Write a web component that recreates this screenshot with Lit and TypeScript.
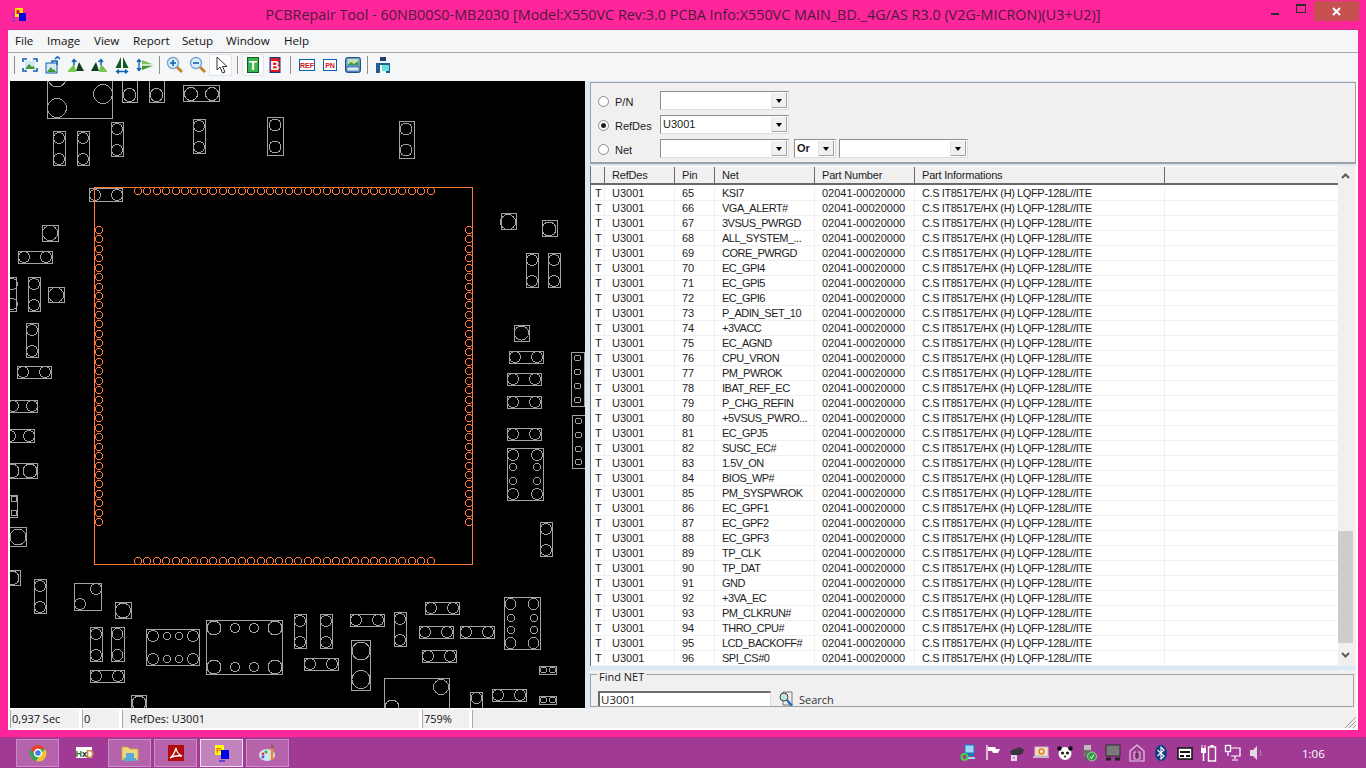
import { LitElement, html, css, svg } from "lit";
import { customElement } from "lit/decorators.js";

type Circle = [number, number, number];
type Part = { b: [number, number, number, number]; c: Circle[] };

const P = (x1: number, y1: number, x2: number, y2: number, ...c: Circle[]): Part => ({ b: [x1, y1, x2, y2], c });
const vp = (x: number, y: number, w = 12, r = 5.5) => P(x, y, x + w, y + 34, [x + w / 2, y + 7, r], [x + w / 2, y + 28, r]);
const hp = (x: number, y: number, w = 34, r = 5.5) => P(x, y, x + w, y + 12, [x + 6, y + 6, r], [x + w - 6, y + 6, r]);

const PARTS: Part[] = [
  P(47, 70, 112, 118, [57, 108, 9.5], [103, 94, 9.5], [57, 78, 9]),
  P(122, 70, 137, 102, [129.5, 95, 6.5]),
  P(149, 70, 164, 102, [156.5, 95, 6.5]),
  P(183, 85, 219, 101, [191, 94, 6.5], [212, 94, 6.5]),
  vp(53, 131), vp(77, 131), vp(111, 122), vp(193, 119),
  P(267, 117, 283, 155, [275, 125, 6], [275, 147, 6]),
  P(399, 121, 414, 158, [406, 129, 6], [406, 150, 6]),
  P(89, 188, 122, 201, [95, 195, 5.5], [117, 195, 5.5]),
  P(42, 225, 58, 241, [50, 233, 7.5]),
  hp(18, 251),
  P(0, 277, 16, 311, [12, 284, 5.5], [12, 304, 5.5]),
  vp(28, 277),
  P(48, 287, 64, 302, [56, 295, 7.5]),
  vp(26, 323),
  hp(17, 366),
  P(0, 400, 37, 412, [13, 406, 5.5], [32, 406, 5.5]),
  P(0, 429, 34, 442, [10, 436, 5.5], [29, 436, 5.5]),
  P(0, 463, 37, 478, [12, 471, 7], [30, 471, 7]),
  P(0, 495, 17, 517, [14, 499, 3], [14, 513, 3]),
  P(0, 527, 26, 546, [18, 537, 8]),
  P(0, 570, 20, 585, [12, 578, 7]),
  vp(34, 579),
  P(74, 583, 101, 610, [96, 589, 5.5], [80, 604, 5.5]),
  P(115, 602, 131, 618, [123, 610.5, 7.5]),
  vp(90, 627), vp(111, 627, 13), hp(90, 670),
  P(131, 695, 146, 720, [139, 703, 7]),
  P(146, 629, 199, 665, [153, 636, 5.5], [193, 636, 5.5], [153, 659, 5.5], [193, 659, 5.5], [167, 636, 3.5], [179, 636, 3.5], [167, 659, 3.5], [179, 659, 3.5]),
  P(206, 620, 282, 674, [214, 628, 7], [275, 628, 7], [214, 667, 7], [275, 667, 7], [235, 628, 4.5], [254, 628, 4.5], [235, 667, 4.5], [254, 667, 4.5]),
  vp(294, 614), vp(320, 614), hp(350, 614), vp(394, 612),
  hp(425, 602), hp(419, 626), hp(460, 626),
  P(504, 597, 540, 649, [510.5, 604, 5.5], [533.5, 604, 5.5], [510.5, 643, 5.5], [533.5, 643, 5.5], [511, 618, 3.5], [534, 618, 3.5], [511, 630, 3.5], [534, 630, 3.5]),
  hp(422, 650), hp(304, 658),
  P(351, 640, 370, 690, [361, 651, 9], [361, 679.5, 9]),
  P(384, 678, 449, 720, [441, 687, 7.5], [392, 707, 7]),
  P(470, 692, 482, 720, [476.5, 698, 5.5]),
  hp(492, 689),
  P(539, 666, 556, 674, [543.5, 670, 3], [552.5, 670, 3]),
  P(539, 696, 556, 704, [543.5, 700, 3], [552.5, 700, 3]),
  P(501, 213, 516, 229, [508, 222, 7.5]),
  P(542, 220, 557, 236, [549, 229, 7]),
  vp(526, 253), vp(548, 253),
  P(514, 325, 529, 341, [521.5, 333, 7]),
  hp(509, 351), hp(507, 373), hp(507, 396), hp(507, 428),
  P(571, 352, 584, 406, [577.5, 358, 3], [577.5, 372, 3], [577.5, 386, 3], [577.5, 400, 3]),
  P(572, 415, 585, 468, [578.5, 421, 3], [578.5, 435, 3], [578.5, 449, 3], [578.5, 462, 3]),
  P(507, 448, 543, 500, [513, 455, 5.5], [537, 455, 5.5], [513, 494, 5.5], [537, 494, 5.5], [513, 467, 3.5], [537, 467, 3.5], [513, 481, 3.5], [537, 481, 3.5]),
  vp(540, 522),
];

const PADS: [number, number][] = [];
for (let i = 0; i < 32; i++) {
  const h = Math.round(137.7 + i * 9.45);
  const v = Math.round(230 + i * 9.42);
  PADS.push([h, 191], [h, 561], [99, v], [469, v]);
}

const NETS = ["KSI7", "VGA_ALERT#", "3VSUS_PWRGD", "ALL_SYSTEM_...", "CORE_PWRGD", "EC_GPI4", "EC_GPI5", "EC_GPI6", "P_ADIN_SET_10", "+3VACC", "EC_AGND", "CPU_VRON", "PM_PWROK", "IBAT_REF_EC", "P_CHG_REFIN", "+5VSUS_PWRO...", "EC_GPJ5", "SUSC_EC#", "1.5V_ON", "BIOS_WP#", "PM_SYSPWROK", "EC_GPF1", "EC_GPF2", "EC_GPF3", "TP_CLK", "TP_DAT", "GND", "+3VA_EC", "PM_CLKRUN#", "THRO_CPU#", "LCD_BACKOFF#", "SPI_CS#0"];
const MENUS: [string, string][] = [["File", "m1"], ["Image", "m2"], ["View", "m3"], ["Report", "m4"], ["Setup", "m5"], ["Window", "m6"], ["Help", "m7"]];
const HEADS: [string, string][] = [["", "c0"], ["RefDes", "c1"], ["Pin", "c2"], ["Net", "c3"], ["Part Number", "c4"], ["Part Informations", "c5"], ["", "c6"]];

const ic = (body: unknown, w = 18, h = 18) => html`<svg class="ic" width=${w} height=${h} viewBox="0 0 18 18">${body}</svg>`;
const B = "#0b5fb5", G = "#3f9a35", DG = "#0d5a22";

const mountain = (flip: boolean) => svg`<g transform=${flip ? "translate(18 0) scale(-1 1)" : ""}>
  <path d="M1 15 7 8 9 15Z" fill="#6fc04a"/><path d="M9 15 12 6 17 15Z" fill="#0f3d20"/><path d="M1 15H9" stroke="#7cc655" stroke-width="2"/>
  <path d="M7 9V4M5 6l2-2.5L9.500 6" stroke=${B} stroke-width="1.500" fill="none"/></g>`;

const TOOLS = [
  ic(svg`<path d="M2 6V3H6M12 3H16V6M2 12V15H6M12 15H16V12" fill="none" stroke=${B} stroke-width="1.600"/><rect x="4" y="5" width="10" height="8" fill="#cfe6f4"/><path d="M4 13 8 8 11 11 12.500 10 14 13Z" fill=${G}/>`),
  ic(svg`<rect x="2" y="7" width="11" height="10" fill="#d8e8f2" stroke=${B}/><path d="M3 16 7 11 9 14 10 13 12 16Z" fill=${G}/><path d="M8 7V5H13V9M11 3 13.500 .8 16 3" fill="none" stroke=${B} stroke-width="1.500"/>`),
  ic(mountain(false)),
  ic(mountain(true)),
  ic(svg`<path d="M8 1V12H2.500Z" fill=${DG}/><path d="M10 1V12H15.500Z" fill=${DG}/><path d="M3.500 15.500H14.500M6 13.500 3.500 15.500 6 17.500M12 13.500 14.500 15.500 12 17.500" stroke=${B} stroke-width="1.300" fill="none"/>`),
  ic(svg`<path d="M6 4 17 8.300H6Z" fill="#7cc655"/><path d="M6 14 17 9.700H6Z" fill=${G}/><path d="M3 4V14M1 6 3 3.500 5 6M1 12 3 14.500 5 12" stroke=${B} stroke-width="1.300" fill="none"/>`),
];
const mag = (plus: boolean) => ic(svg`<path d="M10.500 10.500 16 16" stroke="#c9852a" stroke-width="3"/><circle cx="7" cy="7" r="5.500" fill="#d8eefa" stroke="#7aa5cf" stroke-width="1.400"/><path d=${plus ? "M4 7H10M7 4V10" : "M4 7H10"} stroke=${B} stroke-width="1.600"/>`);
const ref = (t: string, x: number, w: number) => ic(svg`<rect x=${x} y="3.500" width=${w} height="11" fill="#fff" stroke=${B}/><text x="9" y="12" text-anchor="middle" font-family="Liberation Sans" font-size="7" font-weight="700" fill="#d4141c">${t}</text>`);

const TRAY = [
  svg`<rect x="5" y="1" width="9" height="8" fill="#9fd8f5" stroke="#1a76c2"/><rect x="7" y="9" width="7" height="3" fill="#1a76c2"/><circle cx="4.500" cy="13" r="3" fill="none" stroke="#3fd84a" stroke-width="2"/><path d="M8 14H15" stroke="#9fd8f5" stroke-width="2"/>`,
  svg`<path d="M3 1V16" stroke="#fff" stroke-width="1.300"/><path d="M4 3H11L12 5H16L14 9H9L8 7H4Z" fill="#fff"/>`,
  svg`<path d="M2 7 12 3 16 6 14 10 4 13Z" fill="#3b3440"/><rect x="3" y="11" width="6" height="6" fill="#e9d4ee"/><path d="M5 14H7" stroke="#a03a94"/>`,
  svg`<rect x="3" y="3" width="13" height="9" fill="#f2e3c8" stroke="#c9b9c9"/><circle cx="9.500" cy="7.500" r="2.500" fill="none" stroke="#ef7a1a" stroke-width="1.500"/><path d="M1 13H17" stroke="#c4b4c4" stroke-width="2"/>`,
  svg`<circle cx="9" cy="9.500" r="6.500" fill="#fff"/><circle cx="3.500" cy="4.500" r="2.200" fill="#111"/><circle cx="14.500" cy="4.500" r="2.200" fill="#111"/><circle cx="6.500" cy="9" r="1.500" fill="#111"/><circle cx="11.500" cy="9" r="1.500" fill="#111"/><circle cx="9" cy="12.500" r="1" fill="#111"/>`,
  svg`<rect x="4" y="1" width="7" height="5" fill="#bdbdbd"/><rect x="3" y="6" width="8" height="7" fill="#6f6f6f"/><rect x="5.500" y="13" width="3" height="4" fill="#5b5b5b"/><circle cx="12" cy="12.500" r="4.500" fill="#2f9a3a" stroke="#e8f5e8" stroke-width=".6"/><path d="M10 12.500 11.500 14.500 14 10.500" stroke="#fff" fill="none"/>`,
  svg`<rect x="2" y="1" width="14" height="11" fill="#7a7a7a" stroke="#2c2c2c"/><path d="M2 15H7M11 15H16" stroke="#222" stroke-width="3"/>`,
  svg`<path d="M2 7 9 1 16 7V17H2Z" fill="none" stroke="#e6c9e6" stroke-width="1.200"/><path d="M6 8H12V15H6Z" fill="none" stroke="#e6c9e6"/><path d="M9 7V15" stroke="#2c2c2c"/>`,
  svg`<ellipse cx="9" cy="9" rx="6" ry="8" fill="#123f80"/><path d="M5.500 6 12 12 9 15V3L12 6 5.500 12" stroke="#fff" fill="none" stroke-width="1.100"/>`,
  svg`<rect x="2" y="4" width="14" height="11" fill="#fff" stroke="#111" stroke-width="1.500"/><path d="M4 8H14M4 12H8M10 12H14" stroke="#111" stroke-width="2"/>`,
  svg`<path d="M2 1V4M5 1V4" stroke="#fff"/><rect x="1" y="4" width="5" height="5" fill="#fff"/><path d="M3.500 9V17" stroke="#fff" stroke-width="1.500"/><rect x="8.500" y="3" width="7" height="14" fill="none" stroke="#fff" stroke-width="1.400"/><rect x="10.500" y="1" width="3" height="2" fill="#fff"/>`,
  svg`<rect x="1.500" y="1.500" width="5" height="6" fill="none" stroke="#fff" stroke-width="1.300"/><path d="M4 8V12M7 4H16V12H7M11 12V15M8 16H14" stroke="#fff" fill="none" stroke-width="1.200"/>`,
  svg`<path d="M2 6H5L9 2V16L5 12H2Z" fill="#e3dbe6"/><path d="M12 6Q14 9 12 12" stroke="#a9a" fill="none"/>`,
];

const TASK = [
  svg`<circle cx="11" cy="11" r="8" fill="#3aa655"/><path d="M11 3A8 8 0 0 1 18 7H11Z" fill="#e64536"/><path d="M3.500 8A8 8 0 0 0 9 19L12 13Z" fill="#3aa655"/><path d="M18 7A8 8 0 0 1 9 19L14 12Z" fill="#f4c430"/><path d="M11 3A8 8 0 0 0 4 7L8 13 11 7Z" fill="#e64536"/><circle cx="11" cy="11" r="3.500" fill="#3f7ee0" stroke="#fff" stroke-width="1.400"/>`,
  svg`<rect x="3" y="5" width="16" height="11" fill="#fff"/><text x="2.500" y="14.500" font-family="Liberation Sans" font-size="9" font-weight="700" fill="#1f7a2f">H</text><text x="9" y="14.500" font-family="Liberation Sans" font-size="9" font-weight="700" fill="#222">x</text><text x="13" y="15.500" font-family="Liberation Sans" font-size="11" font-weight="700" fill="#c98840">D</text>`,
  svg`<path d="M3 5H9L11 7H19V18H3Z" fill="#f0d77e" stroke="#c9a840"/><rect x="7" y="11" width="8" height="7" fill="#5aa9dd"/><path d="M5 19H17V16H5Z" fill="#5aa9dd"/>`,
  svg`<rect x="3" y="3" width="16" height="16" fill="#b30b0b"/><path d="M5 16Q9 13 11 6Q12 12 17 14Q10 13 5 16" fill="none" stroke="#fff" stroke-width="1.300"/>`,
  svg`<rect x="4" y="3" width="9" height="10" fill="#ffff00"/><text x="5" y="11" font-family="Liberation Sans" font-size="8" fill="#e3141c">P</text><rect x="10" y="8" width="8" height="9" fill="#0000ee"/><path d="M8 19H14" stroke="#0000ee"/>`,
  svg`<ellipse cx="10" cy="13" rx="8" ry="6" fill="#cfe4f2"/><circle cx="6" cy="12" r="1.400" fill="#e33"/><circle cx="9" cy="10" r="1.400" fill="#3a3"/><circle cx="6" cy="15" r="1.400" fill="#36c"/><path d="M15 18V6" stroke="#ef8a1a" stroke-width="2.400"/><path d="M14 6 15 2 17 6Z" fill="#7a5a40"/>`,
];

@customElement("app-root")
export class AppRoot extends LitElement {
  static styles = css`
    :host { display: flex; flex-direction: column; width: 1366px; height: 768px; overflow: hidden; background: #ff269c; font-family: "Liberation Sans", Arial, sans-serif; font-size: 11px; color: #1c1c1c; }
    .tb { height: 30px; display: grid; grid-template-columns: 1fr auto 1fr; align-items: start; flex: none; }
    .logo { margin: 7px 0 0 12px; }
    .title { font: 14.39px/30px "Open Sans", sans-serif; color: #4c1a3c; white-space: nowrap; }
    .wbtns { display: flex; justify-content: flex-end; padding-right: 7px; }
    .wb { width: 26px; height: 20px; display: flex; align-items: center; justify-content: center; }
    .wb.min i { width: 8px; height: 2px; background: #2b2b2b; margin-top: 8px; display: block; }
    .wb.max i { width: 8px; height: 6px; border: 1px solid #2b2b2b; border-top-width: 2px; display: block; margin-top: -3px; }
    .wb.cl { width: 45px; height: 20px; background: #c75050; margin-top: 1px; }
    .client { flex: none; height: 700px; margin: 0 8px; background: #f5f6f7; display: flex; flex-direction: column; box-shadow: 0 -1px 0 #d8288e; }
    .menu { height: 22px; display: flex; font: 11.6px/22px "Open Sans", sans-serif; color: #111; flex: none; }
    .menu span { display: block; padding-left: 7px; box-sizing: border-box; }
    .m1 { width: 32px; } .m2 { width: 47px; } .m3 { width: 39px; } .m4 { width: 49px; } .m5 { width: 44px; } .m6 { width: 58px; } .m7 { width: 40px; }
    .tools { height: 29px; flex: none; border-top: 1px solid #a8a8a8; display: flex; align-items: flex-start; padding: 1px 0 0 6px; box-sizing: border-box; }
    .btn { width: 23px; height: 22px; display: flex; align-items: center; justify-content: center; box-sizing: border-box; flex: none; }
    .btn.n { width: 22px; }
    .btn.on { background: #fbfcfd; box-shadow: inset 0 0 0 1px #e0e4e8; }
    .sep { width: 1px; height: 18px; background: #8f8f8f; margin: 2px 3px 0; flex: none; }
    .sep.first { margin: 2px 3px 0 0; }
    .sep.s2 { margin: 2px 4px 0 5px; }
    .sep.s3 { margin: 2px 4px 0 4px; }
    .ic { display: block; }
    .main { flex: 1; min-height: 0; display: flex; background: #fff; padding: 0 2px; }
    .pcb { width: 575px; height: 627px; background: #000; display: block; flex: none; }
    .right { width: 771px; background: #dce8f4; padding: 1px 0 0 5px; box-sizing: border-box; display: flex; flex-direction: column; }
    .filter { height: 82px; flex: none; background: #f0f0f0; border-top: 1px solid #a0a0a0; border-bottom: 2px solid #a0a0a0; border-right: 1px solid #a0a0a0; box-sizing: border-box; display: flex; flex-direction: column; padding: 8px 0 0 8px; gap: 5px; box-shadow: inset 1px 0 0 #a0a0a0; }
    .frow { display: flex; align-items: center; height: 19px; }
    .radio { width: 11px; height: 11px; border-radius: 50%; border: 1px solid #8a8a8a; background: #fff; box-sizing: border-box; display: flex; align-items: center; justify-content: center; flex: none; margin-top: 2px; }
    .radio.sel::after { content: ""; width: 5px; height: 5px; background: #222; border-radius: 50%; }
    .rl { width: 51px; padding: 2px 0 0 6px; box-sizing: border-box; flex: none; }
    .combo { height: 19px; box-sizing: border-box; background: #fff; border: 1px solid #8e8e8e; border-right-color: #dcdcdc; border-bottom-color: #dcdcdc; display: flex; justify-content: space-between; align-items: stretch; padding: 1px; flex: none; }
    .combo span { padding-left: 1px; line-height: 14px; }
    .combo b { font-weight: 700; padding-left: 1px; line-height: 15px; }
    .arrow { width: 16px; background: #f0f0f0; box-shadow: inset 1px 0 0 #e4e4e4, inset -1px -1px 0 #a0a0a0; display: flex; align-items: center; justify-content: center; }
    .arrow::after { content: ""; border: 3.5px solid transparent; border-top: 4px solid #000; border-bottom: 0; }
    .w129 { width: 129px; } .w42 { width: 42px; margin-left: 5px; } .w129b { width: 129px; margin-left: 3px; }
    .tw { flex: none; height: 500px; display: flex; background: #fff; border-right: 3px solid #f0f0f0; box-sizing: border-box; width: 766px; margin-top: 2px; }
    .tbl { flex: 1; min-width: 0; border-left: 1px solid #707070; }
    .grid { display: grid; grid-template-columns: 14px 70px 40px 100px 100px 250px 1fr; }
    .head { height: 19px; background: #f0f0f0; border-bottom: 2px solid #6a6a6a; border-top: 1px solid #fff; box-sizing: border-box; letter-spacing: -0.2px; }
    .head div { line-height: 16px; padding-left: 7px; border-right: 1px solid #6a6a6a; height: 17px; box-sizing: border-box; }
    .head div.c6 { border-right: 0; } .head div.c0 { padding: 0; }
    .row { height: 15px; line-height: 14px; }
    .row div { padding-left: 7px; border-right: 1px solid #f0f0f0; border-bottom: 1px solid #f0f0f0; height: 15px; box-sizing: border-box; white-space: nowrap; overflow: hidden; }
    .row div.t { padding-left: 4px; }
    .row div.net { letter-spacing: -0.5px; }
    .row div.info { letter-spacing: -0.4px; }
    .row div:last-child { border-right: 0; }
    .body { padding-top: 1px; }
    .sb { width: 15px; background: #f0f0f0; position: relative; flex: none; }
    .thumb { position: absolute; left: 0; right: 0; top: 365px; height: 112px; background: #cdcdcd; }
    .chev { position: absolute; left: 3px; width: 9px; height: 6px; }
    .chev.up { top: 7px; } .chev.dn { bottom: 8px; }
    .find { flex: 1; min-height: 0; margin-top: 4px; background: #f0f0f0; position: relative; padding: 4px 2px 0 0; }
    .gb { border: 1px solid #a0a0a0; height: 33px; position: relative; box-sizing: border-box; }
    .gb > em { font: normal 11px/12px "Open Sans", sans-serif; position: absolute; top: -4px; left: 6px; background: #f0f0f0; padding: 0 2px; color: #222; }
    .frow2 { display: flex; padding: 16px 0 0 7px; }
    .inp { width: 173px; height: 15px; background: #fff; border: 1px solid #6d6d6d; border-width: 2px 1px 0 2px; border-right-color: #ddd; box-sizing: border-box; font: 11.5px/13px "Open Sans", sans-serif; padding-left: 1px; flex: none; }
    .srch { margin-left: 8px; display: flex; gap: 4px; font: 11px/13px "Open Sans", sans-serif; color: #333; height: 15px; }
    .srch span { padding-top: 2px; }
    .status { height: 21px; flex: none; display: flex; background: #fff; padding: 0 2px; gap: 3px; font: 11px/17px "Open Sans", sans-serif; color: #111; border-top: 1px solid #f5f5f5; box-sizing: border-box; }
    .cell { background: #f0f0f0; box-shadow: inset 1px 0 0 #a8a8a8; padding-left: 2px; height: 18px; box-sizing: border-box; flex: none; }
    .cell.c1 { width: 69px; } .cell.c2 { width: 37px; } .cell.c3 { width: 297px; padding-left: 8px; } .cell.c4 { width: 47px; }
    .cell.grow { flex: 1; position: relative; }
    .grip { position: absolute; right: 0; bottom: 0; }
    .taskwrap { flex: 1; display: flex; flex-direction: column; justify-content: flex-end; }
    .task { height: 30px; background: #a03a94; display: flex; align-items: center; padding-left: 16px; box-shadow: 0 -1px 0 #b4318f; }
    .tbtn { width: 43px; height: 28px; margin-right: 3px; display: flex; align-items: center; justify-content: center; background: #b563ab; box-shadow: inset 0 0 0 1px #c98ec3; box-sizing: border-box; }
    .tbtn.plain { background: none; box-shadow: none; }
    .tbtn.active { background: #c283bd; box-shadow: inset 0 0 0 1px #f0e2ee; }
    .tray { margin-left: auto; display: flex; align-items: center; padding-right: 43px; }
    .tray svg { width: 18px; height: 18px; margin-right: 6px; display: block; flex: none; }
    .clock { font: 11.5px "Open Sans", sans-serif; color: #fff; margin-left: 30px; width: 21px; white-space: nowrap; }
  `;

  render() {
    return html`
      <div class="tb">
        <svg class="logo" width="16" height="16" viewBox="0 0 16 16"><path d="M1 4V14H4" fill="none" stroke="#6a3cf0"/><rect x="3" y="1" width="8" height="9" fill="#ffe600"/><rect x="4.500" y="3" width="3" height="4" fill="#e3141c"/><rect x="7" y="6" width="7" height="8" fill="#0000e0"/></svg>
        <div class="title">PCBRepair Tool - 60NB00S0-MB2030 [Model:X550VC Rev:3.0 PCBA Info:X550VC MAIN_BD._4G/AS R3.0 (V2G-MICRON)(U3+U2)]</div>
        <div class="wbtns">
          <div class="wb min"><i></i></div><div class="wb max"><i></i></div>
          <div class="wb cl"><svg width="9" height="9" viewBox="0 0 9 9"><path d="M1 1 8 8M8 1 1 8" stroke="#fff" stroke-width="2"/></svg></div>
        </div>
      </div>
      <div class="client">
        <div class="menu">${MENUS.map(([m, c]) => html`<span class=${c}>${m}</span>`)}</div>
        <div class="tools">
          <div class="sep first"></div>
          ${TOOLS.map((t) => html`<div class="btn">${t}</div>`)}
          <div class="sep"></div>
          <div class="btn">${mag(true)}</div><div class="btn">${mag(false)}</div>
          <div class="btn on">${ic(svg`<path d="M5 1V14L8 11 10.500 17 13 16 10.500 10.500H15Z" fill="#fff" stroke="#333"/>`)}</div>
          <div class="sep s2"></div>
          <div class="btn n on">${ic(svg`<rect x="3.500" y="1.500" width="11" height="15" fill="#3cb44a" stroke="#0b5a2a"/><text x="9" y="14" text-anchor="middle" font-family="Liberation Sans" font-size="13" font-weight="700" fill="#fff">T</text>`)}</div>
          <div class="btn n">${ic(svg`<rect x="4" y="1.500" width="10" height="15" fill="#e3141c" stroke="#123a8a"/><text x="9" y="14" text-anchor="middle" font-family="Liberation Sans" font-size="13" font-weight="700" fill="#fff">B</text>`)}</div>
          <div class="sep s3"></div>
          <div class="btn">${ref("REF", 1.5, 15)}</div><div class="btn">${ref("PN", 2.5, 13)}</div>
          <div class="btn">${ic(svg`<rect x="1.500" y="1.500" width="15" height="15" rx="2" fill="#5a9bd5" stroke="#264f7a"/><rect x="3.500" y="3" width="11" height="6" fill="#bfe0b0"/><path d="M3.500 9 7 6 10 8 14.500 5V9Z" fill=${G}/><rect x="3" y="11" width="12" height="4" fill="#d8e8f5" stroke="#264f7a" stroke-width=".6"/>`)}</div>
          <div class="sep"></div>
          <div class="btn">${ic(svg`<rect x="6" y="1" width="6" height="4" fill="#1f3d66"/><path d="M2 17V7H16V17H12V9H6V17Z" fill="#1f5f92"/><rect x="8" y="9" width="7" height="6" fill="#66e0d8"/>`)}</div>
        </div>
        <div class="main">
          <svg class="pcb" viewBox="10 81 575 627" width="575" height="627">
            <g fill="none" stroke="#a3a3a3" shape-rendering="crispEdges">
              ${PARTS.map((p) => svg`<rect x=${p.b[0] + 0.5} y=${p.b[1] + 0.5} width=${p.b[2] - p.b[0]} height=${p.b[3] - p.b[1]}/>
                ${p.c.map((c) => svg`<circle cx=${c[0]} cy=${c[1]} r=${c[2]}/>`)}`)}
            </g>
            <g fill="none" stroke="#ff7838" shape-rendering="crispEdges">
              <rect x="94.500" y="187.500" width="378" height="377"/>
              ${PADS.map((d) => svg`<circle cx=${d[0]} cy=${d[1]} r="3.500"/>`)}
            </g>
          </svg>
          <div class="right">
            <div class="filter">
              <div class="frow"><span class="radio"></span><span class="rl">P/N</span><div class="combo w129"><span></span><i class="arrow"></i></div></div>
              <div class="frow"><span class="radio sel"></span><span class="rl">RefDes</span><div class="combo w129"><span>U3001</span><i class="arrow"></i></div></div>
              <div class="frow"><span class="radio"></span><span class="rl">Net</span><div class="combo w129"><span></span><i class="arrow"></i></div>
                <div class="combo w42"><b>Or</b><i class="arrow"></i></div><div class="combo w129b"><span></span><i class="arrow"></i></div></div>
            </div>
            <div class="tw">
              <div class="tbl">
                <div class="grid head">${HEADS.map(([t, c]) => html`<div class=${c}>${t}</div>`)}</div>
                <div class="body">${NETS.map((n, i) => html`<div class="grid row"><div class="t">T</div><div>U3001</div><div>${65 + i}</div><div class="net">${n}</div><div>02041-00020000</div><div class="info">C.S IT8517E/HX (H) LQFP-128L//ITE</div><div></div></div>`)}</div>
              </div>
              <div class="sb">
                <svg class="chev up" viewBox="0 0 9 6"><path d="M1 5 4.500 1.500 8 5" fill="none" stroke="#5a5a5a" stroke-width="2"/></svg>
                <div class="thumb"></div>
                <svg class="chev dn" viewBox="0 0 9 6"><path d="M1 1 4.500 4.500 8 1" fill="none" stroke="#5a5a5a" stroke-width="2"/></svg>
              </div>
            </div>
            <div class="find">
              <div class="gb"><em>Find NET</em>
                <div class="frow2"><div class="inp">U3001</div>
                  <div class="srch"><svg width="16" height="15" viewBox="0 0 16 15"><path d="M4 1H13V14H4Z" fill="#f3f0e0" stroke="#777"/><circle cx="5" cy="6" r="4" fill="#bfe6e6" stroke="#444"/><path d="M8 9 13 15" stroke="#2a6bd0" stroke-width="2.500"/></svg><span>Search</span></div>
                </div>
              </div>
            </div>
          </div>
        </div>
        <div class="status">
          <div class="cell c1">0,937 Sec</div>
          <div class="cell c2">0</div>
          <div class="cell c3">RefDes: U3001</div>
          <div class="cell c4">759%</div>
          <div class="cell grow"><svg class="grip" width="12" height="12" viewBox="0 0 12 12"><path d="M1 12 12 1M5 12 12 5M9 12 12 9" stroke="#9a9a9a"/></svg></div>
        </div>
      </div>
      <div class="taskwrap">
        <div class="task">
          ${TASK.map((t, i) => html`<div class="tbtn ${i === 1 ? "plain" : i === 4 ? "active" : ""}"><svg width="22" height="22" viewBox="0 0 22 22">${t}</svg></div>`)}
          <div class="tray">${TRAY.map((t) => html`<svg viewBox="0 0 18 18">${t}</svg>`)}<span class="clock">1:06</span></div>
        </div>
      </div>
    `;
  }
}
